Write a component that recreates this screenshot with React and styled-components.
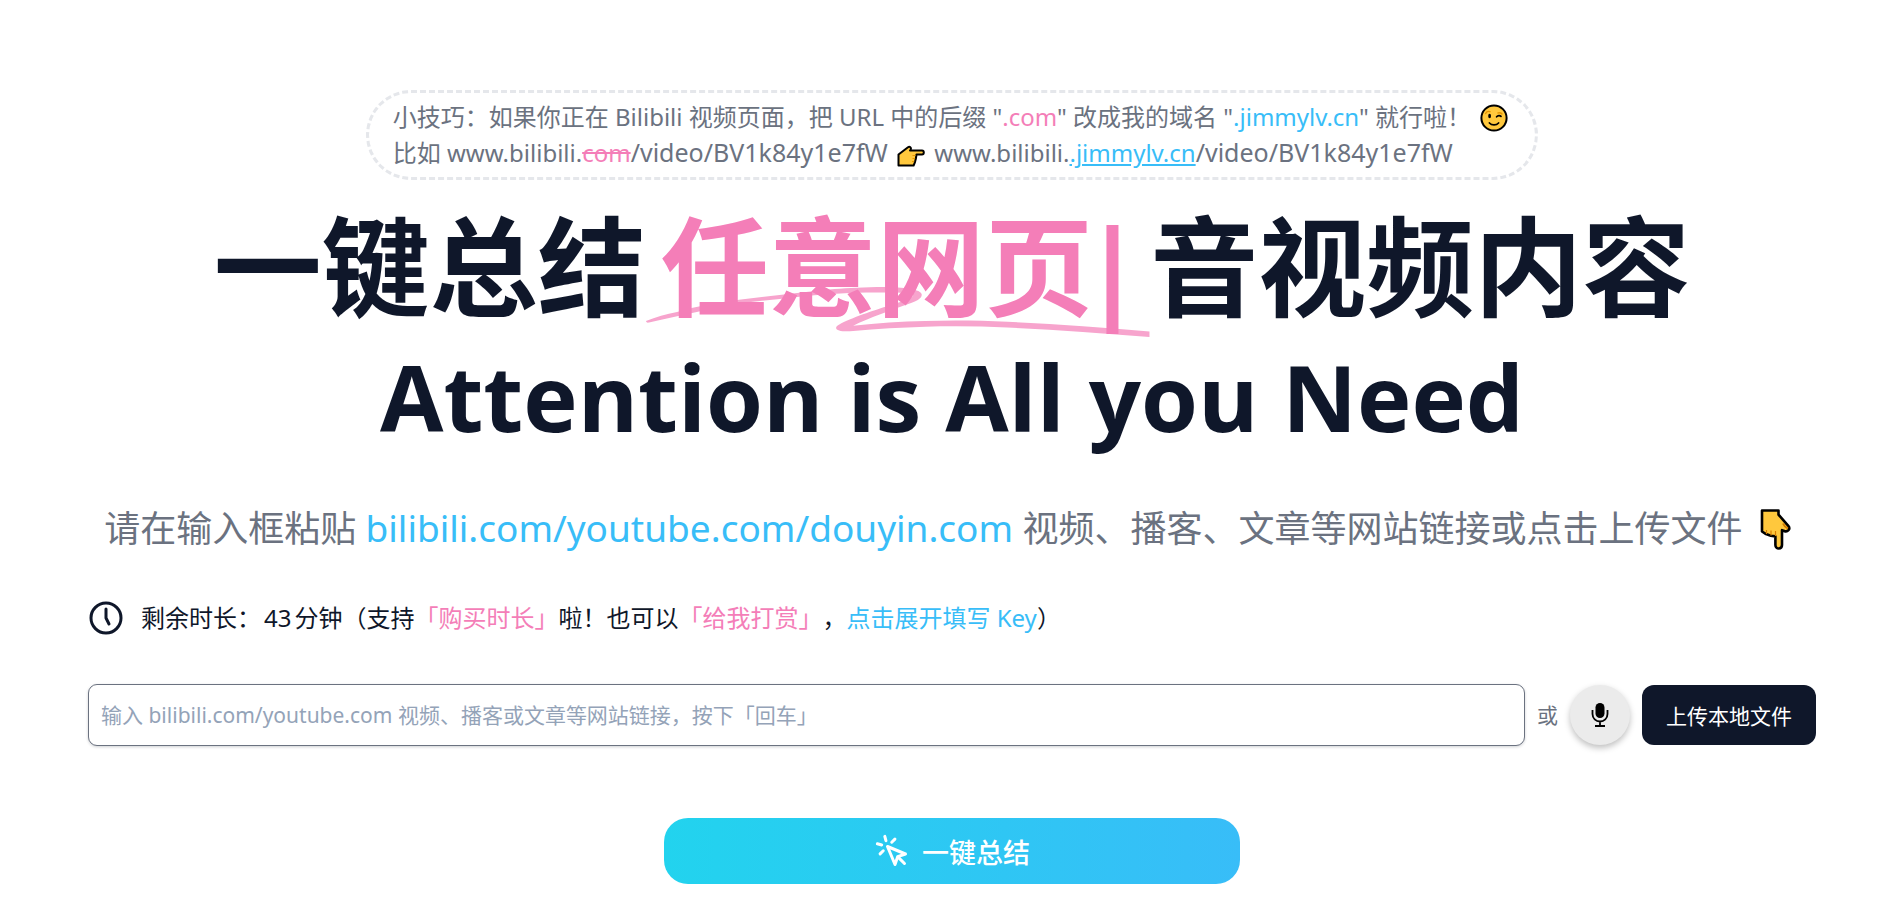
import { createGlobalStyle, styled } from "styled-components";
import { Clock5 } from "lucide-react";

const pink = "#f47eb8";
const sky = "#38bdf8";

const GlobalStyle = createGlobalStyle`
    * {
        box-sizing: border-box;
    }
    body {
        margin: 0;
        background: #ffffff;
        color: #0f172a;
        font-family: "Noto Sans", "Noto Sans CJK SC", sans-serif;
        font-size: 24px;
        line-height: 36px;
        text-spacing-trim: space-all;
    }
    button, input {
        font-family: inherit;
    }
`

const Page = styled.main`
    display: flex;
    flex-direction: column;
    align-items: center;
    padding: 90px 77px 18px 88px;
`

const Tip = styled.p`
    margin: 0;
    padding: 6px 24px;
    border: 3px dashed #e5e7eb;
    border-radius: 45px;
    color: #6b7280;
`

const Accent = styled.span`
    color: ${props => props.$pink ? pink : sky};
`

const OldDomain = styled.s`
    color: ${pink};
`

const NewDomain = styled.u`
    color: ${sky};
`

const VideoPath = styled.span`
    font-size: 25px;
    line-height: 1;
`

const Emoji = styled.svg`
    width: ${props => props.$size}px;
    height: ${props => props.$size}px;
    margin: 0 3px;
    vertical-align: ${props => props.$drop}px;
`

const Title = styled.h1`
    margin: 22px 0 0;
    font-size: 108px;
    line-height: 130px;
    font-weight: 700;
    text-align: center;
    white-space: nowrap;
`

const Typed = styled.span`
    position: relative;
    display: inline-block;
    padding: 0 18px 0 15px;
    color: ${pink};
`

const TypedText = styled.span`
    position: relative;
`

const Caret = styled.span`
    font-family: "DejaVu Sans", sans-serif;
    line-height: 1;
`

const Swoosh = styled.svg`
    position: absolute;
    left: 0;
    bottom: -6px;
    width: 100%;
    height: 51px;
    fill: ${pink};
    opacity: 0.7;
`

const Slogan = styled.span`
    display: block;
    font-family: "Open Sans", sans-serif;
    font-size: 92px;
    line-height: 130px;
`

const Lead = styled.p`
    margin: 37px 0 0;
    color: #6b7280;
    font-size: 36px;
    line-height: 60px;
    white-space: nowrap;
`

const Sites = styled.span`
    color: ${sky};
    font-size: 37px;
    line-height: 1;
`

const Quota = styled.div`
    align-self: stretch;
    display: flex;
    align-items: center;
    gap: 17px;
    margin-top: 41px;
`

const Minutes = styled.span`
    margin: 0 3px;
`

const TextLink = styled.a`
    color: ${props => props.$pink ? pink : sky};
    text-decoration: none;
`

const Form = styled.form`
    align-self: stretch;
    display: flex;
    flex-direction: column;
    align-items: center;
    gap: 72px;
    margin-top: 48px;
`

const Row = styled.div`
    align-self: stretch;
    display: flex;
    align-items: center;
    gap: 12px;
    color: #6b7280;
    font-size: 21px;
`

const UrlInput = styled.input`
    flex: 1;
    min-width: 0;
    height: 62px;
    padding: 0 12px;
    border: 1px solid #6b7280;
    border-radius: 9px;
    box-shadow: 0 1px 3px rgba(15, 23, 42, 0.2);
    font-size: 21px;
    &::placeholder {
        color: #94a3b8;
        opacity: 1;
    }
`

const MicButton = styled.button`
    display: flex;
    align-items: center;
    justify-content: center;
    width: 60px;
    height: 60px;
    padding: 0;
    border: none;
    border-radius: 50%;
    background: #ebebeb;
    box-shadow: 0 3px 6px rgba(0, 0, 0, 0.25);
    cursor: pointer;
`

const UploadButton = styled.button`
    height: 60px;
    padding: 0 24px;
    border: none;
    border-radius: 12px;
    background: #0f172a;
    color: white;
    font-size: 21px;
    cursor: pointer;
`

const SubmitButton = styled.button`
    display: flex;
    align-items: center;
    justify-content: center;
    gap: 12px;
    width: 576px;
    height: 66px;
    border: none;
    border-radius: 24px;
    background: linear-gradient(to right, #22d3ee, #38bdf8);
    color: white;
    font-size: 27px;
    font-weight: 500;
    cursor: pointer;
`

const Wink = () => (
    <Emoji $size={28} $drop={-6} viewBox="0 0 28 28" role="img" aria-label="wink">
        <circle cx="14" cy="14" r="12.6" fill="#ffc83d" stroke="#000" strokeWidth="2" />
        <ellipse cx="9.6" cy="12" rx="1.4" ry="2.2" />
        <path d="M16.6 12.8c1.2-1.6 3.4-1.6 4.4-.4M9.4 19c2.3 2.6 6.9 2.6 9.2 0" fill="none" stroke="#000" strokeWidth="1.7" strokeLinecap="round" />
        <path d="M5.6 9.6c.6-1.800 2.400-2.600 4.400-2M18 9c1.600-.5 3-.1 4 1" fill="none" stroke="#e59500" strokeWidth="1.400" strokeLinecap="round" />
    </Emoji>
)

const PointRight = () => (
    <Emoji $size={28} $drop={-8} viewBox="0 0 28 28" role="img" aria-label="point right">
        <path d="M1.500 23.500V12.500L11 5.200c1.700-1.200 3.700.4 2.700 2.300L13 8.500H25c2.400 0 2.400 4 0 4h-5.500l-.6 4-.9 3.600-1.400 3.400z" fill="#ffc83d" stroke="#000" strokeWidth="2" strokeLinejoin="round" />
        <path d="M15.500 13.500h3M15.500 16.500h2.500M15 19.500h2" stroke="#e59500" strokeWidth="1" />
    </Emoji>
)

const PointDown = () => (
    <Emoji $size={42} $drop={-8} viewBox="0 0 42 42" role="img" aria-label="point down">
        <path d="M7 2.500h16.500v4.200l9.800 11.200c2.600 3-.8 6.600-4 5.100l-2.300-.8V37c0 4.600-6.600 4.600-6.600 0v-8.600l-4.600-.6-4.800-1.700L7 23.500z" fill="#ffc83d" stroke="#000" strokeWidth="2.600" strokeLinejoin="round" />
        <path d="M11.500 22v4M16 22.500v5M20.500 23v5" stroke="#d67d00" strokeWidth="1.200" />
        <path d="M28 15.500c1 2.500 2.600 4 5 5" fill="none" stroke="#d67d00" strokeWidth="2" />
    </Emoji>
)

const Mic = () => (
    <svg width="18" height="24" viewBox="0 0 18 24" aria-hidden="true">
        <rect x="4.500" y="0" width="9" height="15" rx="4.500" />
        <path d="M1.500 7v4a7.500 7.500 0 0 0 15 0V7M9 18.500V23M4 23h10" fill="none" stroke="#000" strokeWidth="1.800" />
    </svg>
)

const CursorClick = () => (
    <svg width="36" height="36" viewBox="0 0 24 24" fill="none" stroke="currentColor" strokeWidth="2" strokeLinecap="round" strokeLinejoin="round" aria-hidden="true">
        <path d="m9 9 5 12 1.774-5.226L21 14 9 9z" />
        <path d="m16.071 16.071 4.243 4.243" />
        <path d="m7.188 2.239.777 2.897M5.136 7.965l-2.898-.777M13.950 4.050l-2.122 2.122m-5.657 5.656-2.120 2.122" />
    </svg>
)

export default function App() {
    return (
        <>
            <GlobalStyle />
            <Page>
                <Tip>
                    小技巧：如果你正在 Bilibili 视频页面，把 URL 中的后缀 "<Accent $pink>.com</Accent>" 改成我的域名 "<Accent>.jimmylv.cn</Accent>" 就行啦！ <Wink />
                    <br />
                    比如 www.bilibili.<OldDomain>com</OldDomain><VideoPath>/video/BV1k84y1e7fW</VideoPath> <PointRight /> www.bilibili.<NewDomain>.jimmylv.cn</NewDomain><VideoPath>/video/BV1k84y1e7fW</VideoPath>
                </Tip>
                <Title>
                    一键总结
                    <Typed>
                        <Swoosh viewBox="0 0 504 51" preserveAspectRatio="none" aria-hidden="true">
                            <path d="M0 34C10 30 20 27 31 25C52 19 73 15 95 12.500L151 6C175 3 198 .5 238 0C256 0 276 2 275.500 8C275 12 270 14 262 17C246 23 222 31 207 38.700C231 36 255 34.500 279 34C306 33 334 33.500 361 34.700C408 37 456 40 503 44.500V50C456 46 408 42.500 361 40.500C334 39.300 306 39 279 39.800C255 40.500 231 42 207 44C198 45 189 44 190 40.500C191 36 220 26 231 22.500C244 18 258 14 263 11.500C267 9.500 269 7.500 263 6.500C256 5.300 247 5.300 220 5.500C197 6 174 7.500 151 10C133 12 114 14 96 16C81 18.500 67 21.500 53 24.500C36 28 19 32 3 35.500C1 36 0 35 0 34Z" />
                        </Swoosh>
                        <TypedText>任意网页<Caret>|</Caret></TypedText>
                    </Typed>
                    音视频内容
                    <Slogan>Attention is All you Need</Slogan>
                </Title>
                <Lead>
                    请在输入框粘贴 <Sites>bilibili.com/youtube.com/douyin.com</Sites> 视频、播客、文章等网站链接或点击上传文件 <PointDown />
                </Lead>
                <Quota>
                    <Clock5 size={36} />
                    <span>
                        剩余时长：<Minutes>43</Minutes>分钟（支持
                        <TextLink $pink href="#buy">「购买时长」</TextLink>
                        啦！也可以
                        <TextLink $pink href="#donate">「给我打赏」</TextLink>
                        ，
                        <TextLink href="#key">点击展开填写 Key</TextLink>
                        ）
                    </span>
                </Quota>
                <Form onSubmit={e => e.preventDefault()}>
                    <Row>
                        <UrlInput
                            type="text"
                            aria-label="视频链接"
                            placeholder="输入 bilibili.com/youtube.com 视频、播客或文章等网站链接，按下「回车」"
                        />
                        <span>或</span>
                        <MicButton type="button" aria-label="语音"><Mic /></MicButton>
                        <UploadButton type="button">上传本地文件</UploadButton>
                    </Row>
                    <SubmitButton type="submit">
                        <CursorClick />
                        一键总结
                    </SubmitButton>
                </Form>
            </Page>
        </>
    )
}
